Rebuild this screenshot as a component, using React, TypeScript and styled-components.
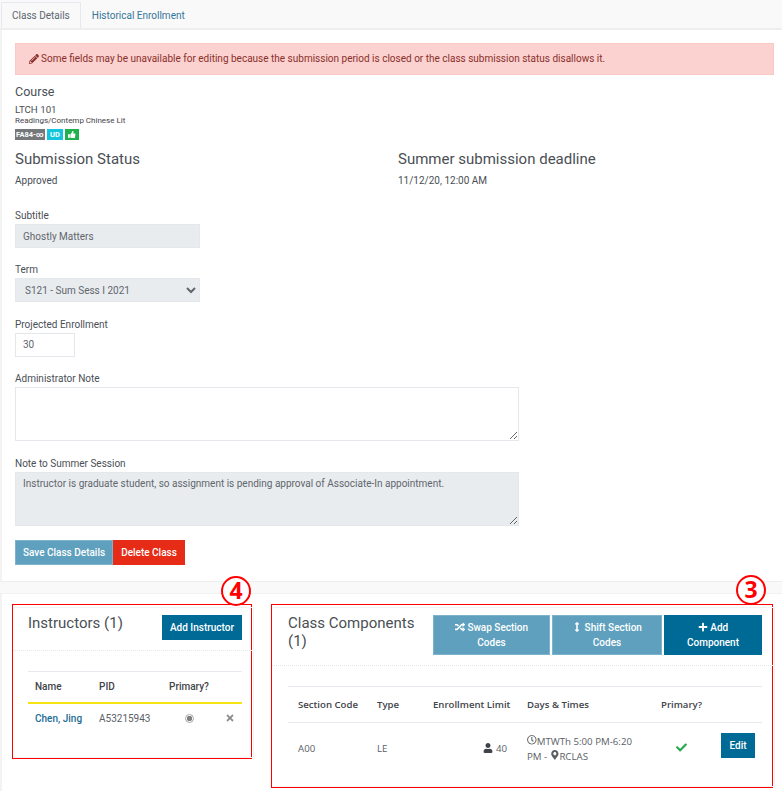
import styled, { createGlobalStyle } from 'styled-components';
import {
  FaArrowsAltV,
  FaCheck,
  FaMapMarkerAlt,
  FaPencilAlt,
  FaPlus,
  FaRandom,
  FaRegClock,
  FaThumbsUp,
  FaTimes,
  FaUser,
} from 'react-icons/fa';

const GlobalStyle = createGlobalStyle`
  html, body {
    margin: 0;
    padding: 0;
    background: #fff;
  }
  * {
    box-sizing: border-box;
  }
  body {
    font-family: Roboto, "Liberation Sans", sans-serif;
    font-size: 10px;
    color: #4a4f55;
  }
`;

const Page = styled.div`
  width: 782px;
  height: 808px;
  overflow: hidden;
  position: relative;
`;

const TabBar = styled.div`
  height: 30px;
  background: #f9f9f9;
  border-bottom: 2px solid #eeeeee;
  padding: 2px 0 0 1px;
  display: flex;
`;

const Tab = styled.div<{ $active?: boolean }>`
  height: 26px;
  padding: 0 10px;
  font-size: 10px;
  line-height: 25px;
  color: ${(p) => (p.$active ? '#5c6670' : '#36759a')};
  background: transparent;
  border: 1px solid ${(p) => (p.$active ? '#e8e8f0' : 'transparent')};
  border-bottom: none;
`;

const DetailsCard = styled.div`
  height: 552px;
  padding: 13px 8px 0 13px;
  border-left: 2px solid #f3f3f3;
  border-bottom: 1px solid #eeeeee;
`;

const Alert = styled.div`
  height: 32px;
  padding-left: 13px;
  background: #fbd2cf;
  border: 1px solid #f9c9c5;
  color: #8a2f2c;
  font-size: 10px;
  line-height: 30px;
  display: flex;
  align-items: center;
  gap: 2px;
  & svg {
    font-size: 10px;
    color: #8a2f2c;
  }
`;

const CourseHeading = styled.h3`
  margin: 9px 0 0;
  font-size: 12.5px;
  line-height: 15px;
  font-weight: 400;
  color: #4a4f55;
`;

const CourseCode = styled.div`
  margin-top: 5px;
  font-size: 9.7px;
  line-height: 12px;
`;

const CourseName = styled.div`
  font-size: 8px;
  line-height: 10px;
  color: #3f444a;
`;

const Badges = styled.div`
  display: flex;
  gap: 2px;
  margin-top: 3px;
`;

const Badge = styled.span<{ $bg: string; $width: number }>`
  width: ${(p) => p.$width}px;
  height: 11px;
  background: ${(p) => p.$bg};
  color: #fff;
  font-size: 7.5px;
  font-weight: 700;
  line-height: 11px;
  display: flex;
  align-items: center;
  justify-content: center;
  white-space: nowrap;
`;

const StatusGrid = styled.div`
  display: grid;
  grid-template-columns: 383px 1fr;
  margin-top: 9px;
`;

const StatusHeading = styled.h3`
  margin: 0;
  font-size: 15px;
  line-height: 20px;
  font-weight: 400;
  color: #4a4f55;
`;

const StatusValue = styled.div`
  margin-top: 6px;
  font-size: 10px;
  line-height: 12px;
`;

const Form = styled.div`
  margin-top: 23px;
  display: flex;
  flex-direction: column;
`;

const Field = styled.div`
  margin-bottom: 16.4px;
`;

const Label = styled.label`
  display: block;
  font-size: 10px;
  line-height: 12px;
  margin-bottom: 2px;
  color: #4a4f55;
`;

const controlBase = `
  display: block;
  font-family: Roboto, "Liberation Sans", sans-serif;
  font-size: 10px;
  color: #5f666d;
  border: 1px solid #e4e7eb;
  border-radius: 0;
  outline: none;
`;

const TextInput = styled.input<{ $width: number; $disabled?: boolean }>`
  ${controlBase}
  width: ${(p) => p.$width}px;
  height: 24px;
  padding: 0 7px;
  background: ${(p) => (p.$disabled ? '#e9ecef' : '#fff')};
`;

const Select = styled.select`
  ${controlBase}
  width: 185px;
  height: 24px;
  padding: 0 5px;
  background: #e9ecef;
  opacity: 1;
`;

const Textarea = styled.textarea<{ $disabled?: boolean }>`
  ${controlBase}
  width: 504px;
  height: 54px;
  padding: 5px 7px;
  background: ${(p) => (p.$disabled ? '#e9ecef' : '#fff')};
  resize: vertical;
`;

const ButtonRow = styled.div`
  display: flex;
  margin-top: -2px;
`;

const Button = styled.button<{ $tone: 'primary' | 'muted' | 'danger' }>`
  font-family: Roboto, "Liberation Sans", sans-serif;
  font-size: 10px;
  font-weight: 500;
  line-height: 15px;
  color: #fff;
  border: 1px solid
    ${(p) => (p.$tone === 'danger' ? '#e62c17' : p.$tone === 'muted' ? '#7db4cc' : '#006a96')};
  background: ${(p) =>
    p.$tone === 'danger' ? '#e62c17' : p.$tone === 'muted' ? '#5ea0bd' : '#006a96'};
  border-radius: 0;
  padding: 0;
  & svg {
    vertical-align: -1px;
  }
`;

const FormButton = styled(Button)<{ $width: number }>`
  width: ${(p) => p.$width}px;
  height: 25px;
`;

const Gap = styled.div`
  height: 12px;
  background: #f9f9f9;
  border-bottom: 1px solid #f1f1f1;
`;

const Lower = styled.div`
  display: flex;
  align-items: flex-start;
  gap: 19px;
  padding: 10px 0 0 10px;
  border-left: 2px solid #f3f3f3;
  height: 197px;
`;

const Annotated = styled.section<{ $width: number; $height: number }>`
  position: relative;
  width: ${(p) => p.$width}px;
  height: ${(p) => p.$height}px;
  border: 1px solid #ff0000;
  &::after {
    content: '';
    position: absolute;
    top: 2px;
    left: 1px;
    right: -3px;
    bottom: 0;
    border: 1px solid #f3f3f3;
    border-left: none;
    pointer-events: none;
  }
`;

const Marker = styled.div<{ $right: number; $top: number }>`
  position: absolute;
  top: ${(p) => p.$top}px;
  right: ${(p) => p.$right}px;
  width: 30px;
  height: 30px;
  border: 2px solid #ff0000;
  border-radius: 50%;
  color: #ff0000;
  font-size: 23px;
  font-weight: 700;
  line-height: 25px;
  text-align: center;
  font-family: "Open Sans", sans-serif;
  background: #fff;
  z-index: 1;
`;

const PanelHeader = styled.div<{ $height: number; $left: number }>`
  display: flex;
  justify-content: space-between;
  align-items: flex-start;
  height: ${(p) => p.$height}px;
  border-bottom: 1px dotted #e6e6e6;
  padding: 0 9px 0 ${(p) => p.$left}px;
  margin-right: -3px;
`;

const PanelTitle = styled.h2<{ $width?: number }>`
  margin: 9px 0 0;
  width: ${(p) => (p.$width ? `${p.$width}px` : 'auto')};
  font-size: 15px;
  line-height: 18px;
  font-weight: 400;
  color: #4a4f55;
`;

const InstructorButton = styled(Button)`
  margin: 10px 3px 0 0;
  width: 80px;
  height: 25px;
`;

const ActionGroup = styled.div`
  display: flex;
  gap: 2px;
  margin: 10px 4px 0 0;
`;

const ActionButton = styled(Button)<{ $width: number }>`
  width: ${(p) => p.$width}px;
  height: 40px;
  padding: 0 12px;
`;

const Table = styled.table<{ $left: number; $inset: number }>`
  border-collapse: collapse;
  table-layout: fixed;
  margin: 20px 0 0 ${(p) => p.$left}px;
  width: ${(p) => p.$inset}px;
  border-top: 1px solid #e6eaee;
`;

const Th = styled.th<{ $width?: number }>`
  width: ${(p) => (p.$width ? `${p.$width}px` : 'auto')};
  padding: 0 0 0 7px;
  height: 31px;
  text-align: left;
  font-size: 10px;
  font-weight: 500;
  color: #3f444a;
`;

const Td = styled.td<{ $align?: string }>`
  padding: 0 0 0 7px;
  height: 31px;
  font-size: 10px;
  color: #5a6066;
  text-align: ${(p) => p.$align || 'left'};
`;

const ComponentTable = styled(Table)`
  font-family: "Open Sans", Roboto, sans-serif;
  & th {
    height: 36px;
    padding-left: 10px;
    font-size: 9.6px;
    font-weight: 600;
  }
  & td {
    height: 52px;
    padding: 0 10px;
    font-size: 9.7px;
  }
`;

const YellowRow = styled.tr`
  border-bottom: 2px solid #f5e312;
`;

const GreyRow = styled.tr`
  border-bottom: 1px solid #e6eaee;
`;

const NameLink = styled.a`
  color: #1c6d95;
  font-weight: 500;
`;

const PrimaryRadio = styled.input`
  appearance: none;
  display: block;
  width: 9px;
  height: 9px;
  margin: 0 0 0 16px;
  border: 1px solid #a8a8a8;
  border-radius: 50%;
  background: radial-gradient(circle, #808080 0 2.5px, #fff 3px);
`;

const RowIcon = styled.span<{ $color: string; $size?: number }>`
  color: ${(p) => p.$color};
  font-size: ${(p) => p.$size || 9}px;
  display: inline-flex;
  vertical-align: -1px;
`;

const Schedule = styled.div`
  line-height: 15px;
`;

const EditButton = styled(Button)`
  display: block;
  width: 34px;
  height: 25px;
  margin: 0 0 7px;
`;

export default function App() {
  return (
    <Page>
      <GlobalStyle />
      <TabBar>
        <Tab $active>Class Details</Tab>
        <Tab>Historical Enrollment</Tab>
      </TabBar>
      <DetailsCard>
        <Alert>
          <FaPencilAlt />
          Some fields may be unavailable for editing because the submission period is closed or the
          class submission status disallows it.
        </Alert>
        <CourseHeading>Course</CourseHeading>
        <CourseCode>LTCH 101</CourseCode>
        <CourseName>Readings/Contemp Chinese Lit</CourseName>
        <Badges>
          <Badge $bg="#75787b" $width={30}>
            FA84-∞
          </Badge>
          <Badge $bg="#12c4dc" $width={16}>
            UD
          </Badge>
          <Badge $bg="#1eb14c" $width={14}>
            <FaThumbsUp />
          </Badge>
        </Badges>
        <StatusGrid>
          <div>
            <StatusHeading>Submission Status</StatusHeading>
            <StatusValue>Approved</StatusValue>
          </div>
          <div>
            <StatusHeading>Summer submission deadline</StatusHeading>
            <StatusValue>11/12/20, 12:00 AM</StatusValue>
          </div>
        </StatusGrid>
        <Form>
          <Field>
            <Label>Subtitle</Label>
            <TextInput $width={185} $disabled readOnly value="Ghostly Matters" />
          </Field>
          <Field>
            <Label>Term</Label>
            <Select defaultValue="S121" disabled>
              <option value="S121">S121 - Sum Sess I 2021</option>
            </Select>
          </Field>
          <Field>
            <Label>Projected Enrollment</Label>
            <TextInput $width={60} readOnly value="30" />
          </Field>
          <Field>
            <Label>Administrator Note</Label>
            <Textarea readOnly value="" />
          </Field>
          <Field>
            <Label>Note to Summer Session</Label>
            <Textarea
              $disabled
              readOnly
              value="Instructor is graduate student, so assignment is pending approval of Associate-In appointment."
            />
          </Field>
          <ButtonRow>
            <FormButton $tone="muted" $width={98}>
              Save Class Details
            </FormButton>
            <FormButton $tone="danger" $width={72}>
              Delete Class
            </FormButton>
          </ButtonRow>
        </Form>
      </DetailsCard>
      <Gap />
      <Lower>
        <Annotated $width={240} $height={155}>
          <Marker $right={0} $top={-29}>
            4
          </Marker>
          <PanelHeader $height={46} $left={15}>
            <PanelTitle>Instructors (1)</PanelTitle>
            <InstructorButton $tone="primary">Add Instructor</InstructorButton>
          </PanelHeader>
          <Table $left={15} $inset={214}>
            <thead>
              <YellowRow>
                <Th $width={64}>Name</Th>
                <Th $width={70}>PID</Th>
                <Th $width={56}>Primary?</Th>
                <Th />
              </YellowRow>
            </thead>
            <tbody>
              <tr>
                <Td>
                  <NameLink>Chen, Jing</NameLink>
                </Td>
                <Td>A53215943</Td>
                <Td>
                  <PrimaryRadio type="radio" checked disabled readOnly />
                </Td>
                <Td>
                  <RowIcon $color="#8a8a8a" $size={10}>
                    <FaTimes />
                  </RowIcon>
                </Td>
              </tr>
            </tbody>
          </Table>
        </Annotated>
        <Annotated $width={502} $height={184}>
          <Marker $right={6} $top={-30}>
            3
          </Marker>
          <PanelHeader $height={61} $left={16}>
            <PanelTitle $width={135}>Class Components (1)</PanelTitle>
            <ActionGroup>
              <ActionButton $tone="muted" $width={117}>
                <FaRandom /> Swap Section Codes
              </ActionButton>
              <ActionButton $tone="muted" $width={110}>
                <FaArrowsAltV /> Shift Section Codes
              </ActionButton>
              <ActionButton $tone="primary" $width={98}>
                <FaPlus /> Add Component
              </ActionButton>
            </ActionGroup>
          </PanelHeader>
          <ComponentTable $left={16} $inset={474}>
            <thead>
              <GreyRow>
                <Th $width={79}>Section Code</Th>
                <Th $width={56}>Type</Th>
                <Th $width={94}>Enrollment Limit</Th>
                <Th $width={134}>Days &amp; Times</Th>
                <Th $width={60}>Primary?</Th>
                <Th />
              </GreyRow>
            </thead>
            <tbody>
              <tr>
                <Td>A00</Td>
                <Td>LE</Td>
                <Td $align="right">
                  <RowIcon $color="#3f444a" $size={10}>
                    <FaUser />
                  </RowIcon>{' '}
                  40
                </Td>
                <Td>
                  <Schedule>
                    <FaRegClock />
                    <span>MTWTh 5:00 PM-6:20</span> <span>PM - </span>
                    <FaMapMarkerAlt />
                    RCLAS
                  </Schedule>
                </Td>
                <Td $align="center">
                  <RowIcon $color="#2aa84f" $size={11}>
                    <FaCheck />
                  </RowIcon>
                </Td>
                <Td>
                  <EditButton $tone="primary">Edit</EditButton>
                </Td>
              </tr>
            </tbody>
          </ComponentTable>
        </Annotated>
      </Lower>
    </Page>
  );
}
